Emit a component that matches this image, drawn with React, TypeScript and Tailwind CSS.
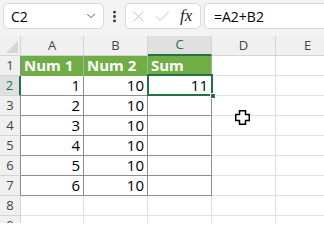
import { ChevronDown, EllipsisVertical, X, Check } from "lucide-react";

const cols = ["A", "B", "C", "D", "E"];
const rows = [1, 2, 3, 4, 5, 6, 7, 8, 9];
const data: Record<number, string[]> = {
  1: ["Num 1", "Num 2", "Sum"],
  2: ["1", "10", "11"],
  3: ["2", "10", ""],
  4: ["3", "10", ""],
  5: ["4", "10", ""],
  6: ["5", "10", ""],
  7: ["6", "10", ""],
};

function Cell({ row, col }: { row: number; col: number }) {
  const inTable = row <= 7 && col < 3;
  const value = inTable ? data[row][col] : "";
  if (row === 1 && inTable) {
    return (
      <div className="h-[20px] bg-[#70ad47] border-r border-b border-r-[#9bbf82] border-b-[#70ad47] px-[3px] flex items-center text-white font-bold text-[15px]">
        {value}
      </div>
    );
  }
  if (inTable) {
    return (
      <div className="h-[20px] border-r border-b border-[#8c8c8c] px-[3px] flex items-center justify-end text-[15px] text-black">
        {value}
      </div>
    );
  }
  return <div className="h-[20px] border-r border-b border-[#e1e1e1]" />;
}

export default function App() {
  return (
    <div className="w-[324px] h-[223px] overflow-hidden bg-white relative font-['Lato',sans-serif]">
      {/* formula bar */}
      <div className="h-[36px] bg-[#f3f3f3] flex items-start pt-[3px] pl-[3px] font-['Open_Sans',sans-serif]">
        <div className="w-[101px] h-[26px] bg-white border border-[#d9d9d9] rounded-[5px] flex items-center justify-between pl-[7px] pr-[5px]">
          <span className="text-[14px] text-black">C2</span>
          <ChevronDown size={14} strokeWidth={1.6} className="text-[#555]" />
        </div>
        <div className="w-[21px] h-[26px] flex items-center justify-center">
          <EllipsisVertical size={15} strokeWidth={2.6} className="text-[#333]" />
        </div>
        <div className="w-[76px] h-[26px] bg-white border border-[#d9d9d9] rounded-[5px] flex items-center pl-[3px] gap-[5px]">
          <X size={19} strokeWidth={1} className="text-[#b8b8b8]" />
          <Check size={19} strokeWidth={1} className="text-[#b8b8b8]" />
          <span className="ml-[3px] italic text-[17px] text-[#222] font-['Liberation_Serif',serif]">fx</span>
        </div>
        <div className="ml-[3px] flex-1 h-[26px] bg-white border border-r-0 border-[#d9d9d9] rounded-l-[5px] flex items-center pl-[9px]">
          <span className="text-[14px] text-black">=A2+B2</span>
        </div>
      </div>

      {/* sheet grid */}
      <div className="grid grid-cols-[21px_63px_64px_64px_64px_64px] font-['Open_Sans',sans-serif]">
        <div className="h-[20px] bg-[#f0f0f0] border-r border-b border-[#d4d4d4] relative overflow-hidden">
          <div className="absolute right-[2px] bottom-[2px] w-0 h-0 border-l-[12px] border-l-transparent border-b-[12px] border-b-[#d5d5d5]" />
        </div>
        {cols.map((c) =>
          c === "C" ? (
            <div
              key={c}
              className="h-[20px] bg-[#e0e0e0] border-r border-r-[#d4d4d4] border-b-2 border-b-[#217346] flex items-center justify-center text-[13px] text-[#217346]"
            >
              {c}
            </div>
          ) : (
            <div
              key={c}
              className="h-[20px] bg-[#f0f0f0] border-r border-b border-[#d4d4d4] flex items-center justify-center text-[13px] text-[#444]"
            >
              {c}
            </div>
          )
        )}
        {rows.map((r) => (
          <div key={r} className="contents">
            {r === 2 ? (
              <div className="h-[20px] bg-[#e0e0e0] border-r-2 border-r-[#217346] border-b border-b-[#d4d4d4] flex items-center justify-center text-[13px] text-[#217346]">
                {r}
              </div>
            ) : r <= 7 ? (
              <div className="h-[20px] bg-[#f0f0f0] border-r border-b border-r-[#8c8c8c] border-b-[#d4d4d4] flex items-center justify-center text-[13px] text-[#444]">
                {r}
              </div>
            ) : (
              <div className="h-[20px] bg-[#f0f0f0] border-r border-b border-[#d4d4d4] flex items-center justify-center text-[13px] text-[#444]">
                {r}
              </div>
            )}
            {cols.map((_, ci) => (
              <Cell key={ci} row={r} col={ci} />
            ))}
          </div>
        ))}
      </div>

      {/* selection on C2 */}
      <div className="absolute left-[147px] top-[74px] w-[66px] h-[22px] border-2 border-[#217346] pointer-events-none" />
      <div className="absolute left-[210px] top-[93px] w-[6px] h-[6px] bg-[#217346] border border-white" />

      {/* cursor */}
      <svg className="absolute left-[235px] top-[110px]" width="15" height="15" viewBox="0 0 15 15">
        <path
          d="M4.5 0.75 H10.5 V4.5 H14.25 V10.5 H10.5 V14.25 H4.5 V10.5 H0.75 V4.5 H4.5 Z"
          fill="white"
          stroke="black"
          strokeWidth="1.5"
        />
      </svg>
    </div>
  );
}
